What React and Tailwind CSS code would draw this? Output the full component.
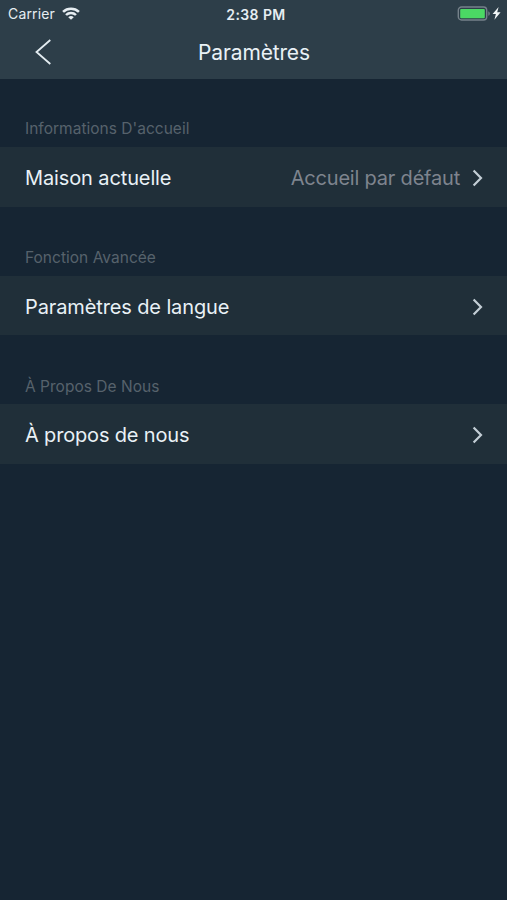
function Chevron() {
  return (
    <svg className="shrink-0" width="12" height="18" viewBox="0 0 12 18" fill="none" stroke="#c3ced6" strokeWidth="2.2">
      <path d="M1.6 1.5 9 9l-7.4 7.5" />
    </svg>
  );
}

function StatusBar() {
  return (
    <div className="grid h-[27px] grid-cols-3 items-center text-[#e6edf2]">
      <div className="flex items-center gap-[7px] pl-2">
        <span className="pb-px text-[14px] tracking-[0.15px]">Carrier</span>
        <svg width="18" height="13" viewBox="0 0 17 13" preserveAspectRatio="none" fill="none" stroke="currentColor" strokeWidth="2.4">
          <path d="M1 4.8a10.7 10.7 0 0 1 15 0" />
          <path d="M3.8 8a6.7 6.7 0 0 1 9.4 0" />
          <path d="M8.5 12.8 5.9 10.2a3.7 3.7 0 0 1 5.2 0z" fill="currentColor" stroke="none" />
        </svg>
      </div>
      <span className="pt-px pl-[5px] text-center text-[14px] font-semibold tracking-[0.4px]">2:38 PM</span>
      <div className="flex items-center justify-end pr-[5px]">
        <svg width="45" height="15" viewBox="0 0 45 15" fill="none">
          <rect x="1.3" y="1" width="28.4" height="13" rx="3.2" stroke="#75818a" strokeWidth="1.4" />
          <rect x="3.2" y="2.9" width="24.6" height="9.4" rx="1" fill="#4bd964" />
          <path d="M31.3 5.2c2 .8 2 3.8 0 4.6z" fill="#75818a" />
          <path d="m41.6 1-6 7.1h3.3l-1.5 5.6 6.2-7.5h-3.4z" fill="#f2f6f8" />
        </svg>
      </div>
    </div>
  );
}

function Section({ title, label, value, titleClass, rowClass }) {
  return (
    <section>
      <h2 className={"flex items-end pl-[25px] text-[15.5px] leading-[20px] text-[#56626c] " + titleClass}>
        {title}
      </h2>
      <button className={"flex w-full items-center bg-[#202f39] pt-[2px] pr-[23px] pl-[25px] text-[20px] text-[#e9f1f6] " + rowClass}>
        <span>{label}</span>
        <span className="mr-[12px] ml-auto tracking-[-0.2px] text-[#7e848e]">{value}</span>
        <Chevron />
      </button>
    </section>
  );
}

export default function App() {
  return (
    <main className="h-[900px] w-[507px] overflow-hidden bg-[#162533] font-['Inter','Liberation_Sans',sans-serif]">
      <header className="h-[79px] bg-[#2d3e49]">
        <StatusBar />
        <div className="grid h-[50px] grid-cols-[100px_1fr_100px] items-center">
          <button className="pl-[34px]" aria-label="Retour">
            <svg width="18" height="28" viewBox="0 0 18 28" fill="none" stroke="#e3ecf1" strokeWidth="1.8">
              <path d="M16.3 2 2.5 14l13.8 12" />
            </svg>
          </button>
          <h1 className="pt-px pl-px text-center text-[21px] tracking-[-0.15px] text-[#e9f1f6]">Paramètres</h1>
        </div>
      </header>
      <Section title="Informations D'accueil" label="Maison actuelle" value="Accueil par défaut" titleClass="h-[68px] pb-[8px] tracking-[0.02px]" rowClass="h-[60px] tracking-[-0.12px]" />
      <Section title="Fonction Avancée" label="Paramètres de langue" titleClass="h-[69px] pb-[8px] tracking-[0.02px]" rowClass="h-[59px] tracking-[-0.12px]" />
      <Section title="À Propos De Nous" label="À propos de nous" titleClass="h-[69px] pb-[7px] tracking-[0.02px]" rowClass="h-[60px] tracking-[-0.17px]" />
    </main>
  );
}
